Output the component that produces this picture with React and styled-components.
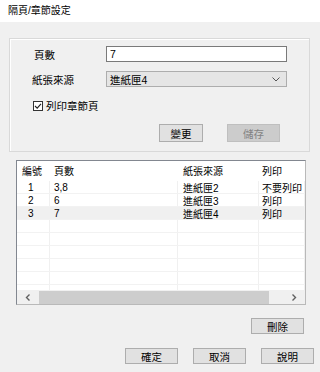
import React from 'react';
import styled, { createGlobalStyle } from 'styled-components';

const GlobalStyle = createGlobalStyle`
  html, body { margin: 0; padding: 0; background: #f0f0f0; }
  body { font-family: "Liberation Sans", "Noto Sans CJK TC", sans-serif; font-size: 10px; color: #000; }
`;

const Window = styled.div`
  width: 320px;
  height: 372px;
  background: #f0f0f0;
  display: flex;
  flex-direction: column;
  overflow: hidden;
`;

const TitleBar = styled.div`
  height: 22px;
  background: #fff;
  padding-left: 8px;
  display: flex;
  align-items: center;
  font-size: 10px;
  line-height: 1;
`;

const GroupBox = styled.div`
  margin: 16px 10px 0 9px;
  height: 114px;
  box-sizing: border-box;
  border: 1px solid #d9d9d9;
  box-shadow: inset 1px 1px 0 #fff;
  padding: 7px 0 0 22px;
  display: flex;
  flex-direction: column;
`;

const FieldRow = styled.div`
  display: flex;
  align-items: center;
  height: 16px;
  margin-bottom: ${p => p.gap || 0}px;
`;

const Label = styled.div`
  width: 74px;
  font-size: 10.5px;
  padding-left: ${p => p.indent || 0}px;
  box-sizing: border-box;
`;

const TextInput = styled.div`
  width: 181px;
  height: 16px;
  box-sizing: border-box;
  border: 1px solid #7a7a7a;
  background: #fff;
  padding-left: 3px;
  display: flex;
  align-items: center;
  font-size: 10.5px;
`;

const Select = styled.div`
  width: 181px;
  height: 16px;
  box-sizing: border-box;
  border: 1px solid #adadad;
  background: #e5e5e5;
  padding: 0 6px 0 3px;
  display: flex;
  align-items: center;
  justify-content: space-between;
  font-size: 10.5px;
`;

const CheckRow = styled.div`
  display: flex;
  align-items: center;
  gap: 3px;
  margin: 11px 0 0 1px;
  font-size: 10.5px;
`;

const CheckBox = styled.span`
  width: 10px;
  height: 10px;
  box-sizing: border-box;
  border: 1px solid #333;
  background: #fff;
  display: flex;
  align-items: center;
  justify-content: center;
`;

const ButtonRow = styled.div`
  display: flex;
  justify-content: ${p => p.align || 'flex-end'};
  gap: ${p => p.gap || 0}px;
  margin: ${p => p.margin || '0'};
`;

const Button = styled.div`
  width: ${p => p.w || 53}px;
  height: ${p => p.h || 16}px;
  box-sizing: border-box;
  border: 1px solid ${p => (p.disabled ? '#bfbfbf' : '#adadad')};
  background: ${p => (p.disabled ? '#cccccc' : '#e1e1e1')};
  color: ${p => (p.disabled ? '#838383' : '#000')};
  display: flex;
  align-items: center;
  justify-content: center;
  font-size: 10.5px;
`;

const ListView = styled.div`
  margin: 8px 14px 0 16px;
  height: 145px;
  box-sizing: border-box;
  border: 1px solid #828790;
  border-right-color: #b9b9b9;
  border-bottom-color: #b9b9b9;
  background: #fff;
  display: flex;
  flex-direction: column;
  overflow: hidden;
`;

const Rows = styled.div`
  flex: 1;
  overflow: hidden;
`;

const Row = styled.div`
  display: grid;
  grid-template-columns: 33px 128px 81px 1fr;
  height: ${p => p.h || 13}px;
  align-items: stretch;
  background: ${p => (p.selected ? '#f0f0f0' : 'transparent')};
  border-bottom: 1px solid ${p => (p.header ? 'transparent' : '#f2f2f2')};
  box-sizing: border-box;
`;

const Cell = styled.div`
  display: flex;
  align-items: center;
  padding-left: ${p => p.pad || 4}px;
  border-right: 1px solid ${p => (p.header ? 'transparent' : '#f0f0f0')};
  font-size: 10px;
  white-space: nowrap;
  overflow: hidden;
`;

const ScrollBar = styled.div`
  height: 14px;
  background: #f0f0f0;
  display: flex;
  align-items: center;
  padding: 0 6px 0 6px;
  gap: 6px;
  font-size: 10px;
  color: #606060;
`;

const Thumb = styled.div`
  flex: 0 0 230px;
  height: 13px;
  background: #cdcdcd;
`;

const Arrow = styled.div`
  width: 10px;
  display: flex;
  align-items: center;
  justify-content: center;
  margin-left: ${p => (p.right ? 'auto' : 0)};
`;

const Chevron = ({ dir }) => (
  <svg width="6" height="7" viewBox="0 0 6 7">
    <path d={dir === 'left' ? 'M4.5 0.5 L1.5 3.5 L4.5 6.5' : 'M1.5 0.5 L4.5 3.5 L1.5 6.5'} fill="none" stroke="#606060" strokeWidth="1.4" />
  </svg>
);

const rows = [
  { no: '1', pages: '3,8', tray: '進紙匣2', print: '不要列印' },
  { no: '2', pages: '6', tray: '進紙匣3', print: '列印' },
  { no: '3', pages: '7', tray: '進紙匣4', print: '列印', selected: true },
];

export default function App() {
  return (
    <>
      <GlobalStyle />
      <Window>
        <TitleBar>隔頁/章節設定</TitleBar>
        <GroupBox>
          <FieldRow gap={9}>
            <Label indent={2}>頁數</Label>
            <TextInput>7</TextInput>
          </FieldRow>
          <FieldRow>
            <Label>紙張來源</Label>
            <Select>
              <span>進紙匣4</span>
              <svg width="8" height="5" viewBox="0 0 8 5">
                <path d="M0.5 0.5 L4 4 L7.5 0.5" fill="none" stroke="#555" strokeWidth="1" />
              </svg>
            </Select>
          </FieldRow>
          <CheckRow>
            <CheckBox>
              <svg width="8" height="8" viewBox="0 0 8 8">
                <path d="M1 4 L3.2 6.2 L7 1.8" fill="none" stroke="#222" strokeWidth="1.1" />
              </svg>
            </CheckBox>
            列印章節頁
          </CheckRow>
          <ButtonRow gap={24} margin="11px 0 0 127px" align="flex-start">
            <Button w={44} h={18}>變更</Button>
            <Button w={53} h={18} disabled>儲存</Button>
          </ButtonRow>
        </GroupBox>
        <ListView>
          <Rows>
            <Row header h={20}>
              <Cell header pad={5}>編號</Cell>
              <Cell header pad={4}>頁數</Cell>
              <Cell header pad={5}>紙張來源</Cell>
              <Cell header pad={3}>列印</Cell>
            </Row>
            {rows.map(r => (
              <Row key={r.no} selected={r.selected}>
                <Cell pad={11}>{r.no}</Cell>
                <Cell pad={4}>{r.pages}</Cell>
                <Cell pad={5}>{r.tray}</Cell>
                <Cell pad={3}>{r.print}</Cell>
              </Row>
            ))}
            {[0, 1, 2, 3, 4, 5].map(i => (
              <Row key={'e' + i}>
                <Cell />
                <Cell />
                <Cell />
                <Cell />
              </Row>
            ))}
          </Rows>
          <ScrollBar>
            <Arrow><Chevron dir="left" /></Arrow>
            <Thumb />
            <Arrow right><Chevron dir="right" /></Arrow>
          </ScrollBar>
        </ListView>
        <ButtonRow margin="13px 16px 0 0">
          <Button w={53}>刪除</Button>
        </ButtonRow>
        <ButtonRow gap={15} margin="14px 6px 0 0">
          <Button w={53}>確定</Button>
          <Button w={53}>取消</Button>
          <Button w={53}>說明</Button>
        </ButtonRow>
      </Window>
    </>
  );
}
